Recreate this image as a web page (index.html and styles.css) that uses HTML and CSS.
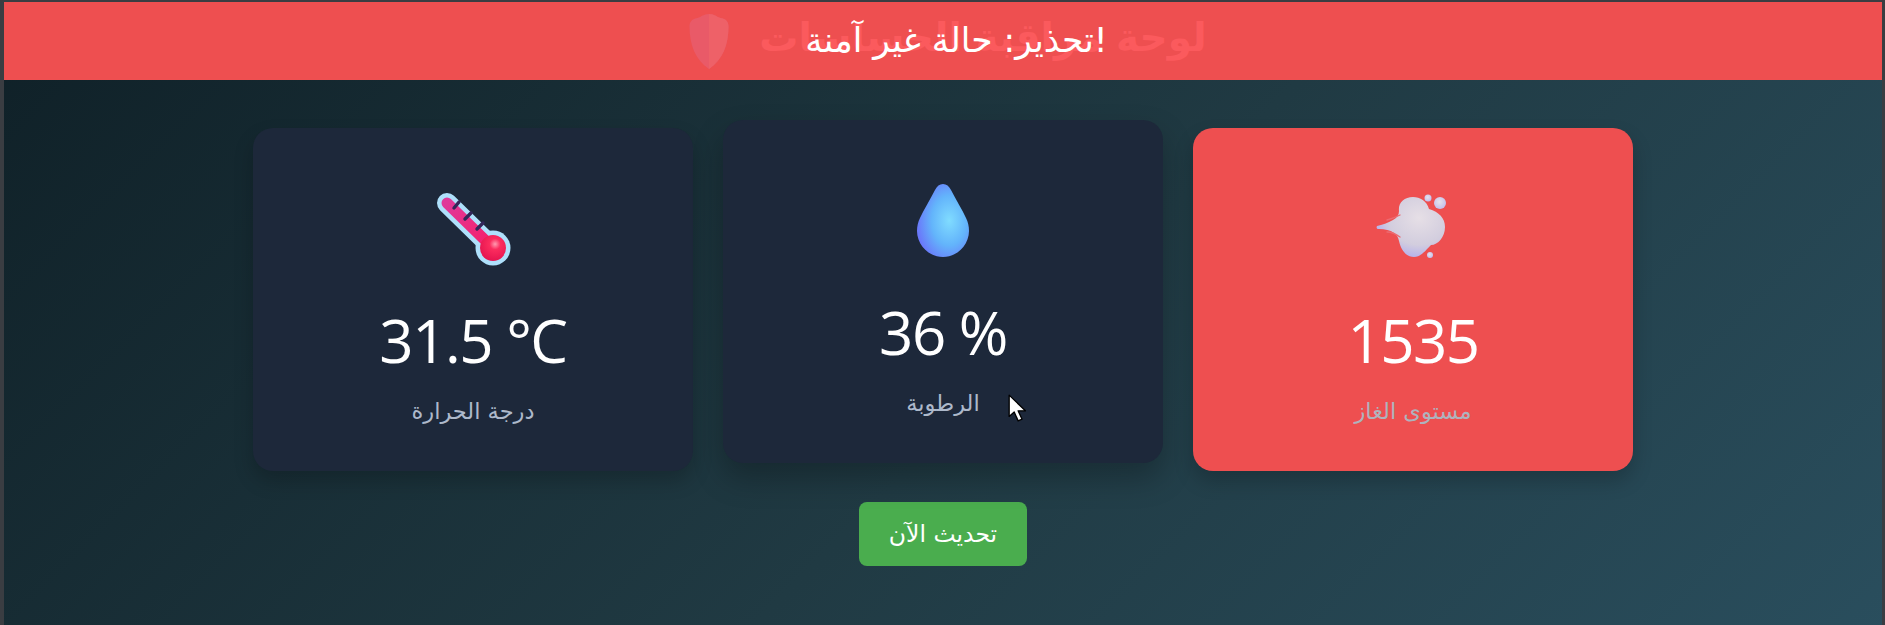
FILE: index.html
```html
<!DOCTYPE html>
<html lang="ar">
<head>
    <meta charset="UTF-8">
    <meta name="viewport" content="width=device-width, initial-scale=1.0">
    <title>لوحة مراقبة الحساسات</title>
    <link rel="stylesheet" href="styles.css">
</head>
<body>
    <header class="header">
        <div class="title-row">
            <svg class="shield" viewBox="0 0 34 48">
                <path d="M17 0 C22 0 24 3 29 4 C32 5 34 7 34 11 C34 27 29 40 17 48 C5 40 0 27 0 11 C0 7 2 5 5 4 C10 3 12 0 17 0 Z" fill="#e95a68"/>
                <path d="M17 0 C22 0 24 3 29 4 C32 5 34 7 34 11 C34 27 29 40 17 48 Z" fill="#ee6168"/>
            </svg>
            <h1 class="title">لوحة مراقبة الحساسات</h1>
        </div>
        <div class="alert">تحذير: حالة غير آمنة!</div>
    </header>

    <main class="main">
        <div class="cards">
            <div class="card">
                <svg class="icon" viewBox="0 0 80 80">
                    <defs>
                        <linearGradient id="tube" x1="0" y1="0" x2="1" y2="1">
                            <stop offset="0" stop-color="#e0389a"/>
                            <stop offset="1" stop-color="#f5206a"/>
                        </linearGradient>
                        <radialGradient id="bulb" cx="0.58" cy="0.35" r="0.7">
                            <stop offset="0" stop-color="#ff9ab0"/>
                            <stop offset="0.3" stop-color="#fb2c5e"/>
                            <stop offset="1" stop-color="#e3124e"/>
                        </radialGradient>
                    </defs>
                    <path d="M14 15 L60 60" stroke="#aee0fb" stroke-width="20" stroke-linecap="round"/>
                    <circle cx="60" cy="60" r="17.5" fill="#aee0fb"/>
                    <path d="M14 15 L56 56" stroke="url(#tube)" stroke-width="11" stroke-linecap="round"/>
                    <circle cx="60" cy="60" r="13" fill="url(#bulb)"/>
                    <path d="M26 14 L21 20 M38 25 L32 31 M50 35 L44 41" stroke="#33265a" stroke-width="3.4" stroke-linecap="round"/>
                </svg>
                <div class="value">31.5 °C</div>
                <div class="label">درجة الحرارة</div>
            </div>

            <div class="card card-raised">
                <svg class="icon" viewBox="0 0 80 80">
                    <defs>
                        <radialGradient id="drop" cx="0.62" cy="0.5" r="0.62">
                            <stop offset="0" stop-color="#80dcff"/>
                            <stop offset="0.55" stop-color="#63b4fb"/>
                            <stop offset="1" stop-color="#6a78fa"/>
                        </radialGradient>
                    </defs>
                    <path d="M40 4 C43.5 4 46 6 48 10 C53 20 59 29 63 38 C65 42 66 46 66 51 C66 65 54 77 40 77 C26 77 14 65 14 51 C14 46 15 42 17 38 C21 29 27 20 32 10 C34 6 36.5 4 40 4 Z" fill="url(#drop)"/>
                </svg>
                <div class="value">36 %</div>
                <div class="label">الرطوبة</div>
            </div>

            <div class="card card-danger">
                <svg class="icon" viewBox="0 0 80 80">
                    <defs>
                        <radialGradient id="puff" cx="0.62" cy="0.35" r="0.75">
                            <stop offset="0" stop-color="#e6dfe6"/>
                            <stop offset="0.6" stop-color="#d2cdde"/>
                            <stop offset="1" stop-color="#aaa6f2"/>
                        </radialGradient>
                        <radialGradient id="dot" cx="0.45" cy="0.4" r="0.7">
                            <stop offset="0" stop-color="#e8e2ea"/>
                            <stop offset="1" stop-color="#bdb9ee"/>
                        </radialGradient>
                    </defs>
                    <path d="M4 38 C3 40 4 41 6 41 C12 41 17 42 21 45 C24 47 25 49 26 53 C28 62 33 69 41 69 C48 69 53 62 58 57 C65 57 72 49 72 39 C72 30 66 24 56 21 C54 13 47 9 40 9 C31 9 25 15 26 23 C26 27 24 30 20 32 C15 35 9 37 4 38 Z" fill="url(#puff)"/>
                    <path d="M14 32 C18 31 23 29 27 27 M14 44 C18 44 23 46 27 49" stroke="#ec6a70" stroke-width="1.3" fill="none" stroke-linecap="round"/>
                    <circle cx="55" cy="10" r="3.5" fill="url(#dot)"/>
                    <circle cx="67" cy="15" r="6" fill="url(#dot)"/>
                    <circle cx="57" cy="67" r="3" fill="url(#dot)"/>
                </svg>
                <div class="value">1535</div>
                <div class="label">مستوى الغاز</div>
            </div>
        </div>

        <button class="refresh-btn" type="button">تحديث الآن</button>
    </main>

    <svg class="cursor" viewBox="0 0 16 25">
        <path d="M1 1 L1 20 L5.5 16 L9 24 L12.5 22.5 L9 15 L15.5 15 Z" fill="#fff" stroke="#000" stroke-width="1.2" stroke-linejoin="round"/>
    </svg>
</body>
</html>
```

FILE: styles.css
```css
* {
    box-sizing: border-box;
}

html, body {
    height: 100%;
}

body {
    margin: 0;
    overflow: hidden;
    border-style: solid;
    border-color: #3a3d42;
    border-width: 2px 3px 0 4px;
    background: linear-gradient(135deg, #0f2027, #203a43 55%, #2c5364 112%);
    color: white;
    font-family: "Open Sans", "DejaVu Sans", sans-serif;
}

.header {
    position: relative;
    height: 78px;
    background-color: #ee4f50;
}

.title-row {
    height: 100%;
    display: flex;
    justify-content: center;
    align-items: center;
    gap: 30px;
    padding-left: 10px;
}

.shield {
    width: 40px;
    height: 55px;
}

.title {
    margin: 0 0 8px;
    direction: rtl;
    font-family: "DejaVu Sans", sans-serif;
    font-size: 39px;
    font-weight: 700;
    color: #fb5a5d;
}

.alert {
    position: absolute;
    top: 0;
    left: 0;
    right: 0;
    bottom: 0;
    display: flex;
    justify-content: center;
    align-items: center;
    padding-left: 27px;
    padding-bottom: 2px;
    direction: ltr;
    font-family: "DejaVu Sans", sans-serif;
    font-size: 34.5px;
    color: white;
}

.main {
    display: flex;
    flex-direction: column;
    align-items: center;
    padding-top: 48px;
}

.cards {
    display: flex;
    gap: 30px;
}

.card {
    width: 440px;
    height: 343px;
    padding-top: 60px;
    display: flex;
    flex-direction: column;
    align-items: center;
    background-color: #1d283a;
    border-radius: 20px;
    box-shadow: 0 10px 20px rgba(0, 0, 0, 0.2);
}

.card-raised {
    transform: translateY(-8px);
    box-shadow: 0 15px 30px rgba(0, 0, 0, 0.25);
}

.card-danger {
    background-color: #ee4f50;
}

.icon {
    width: 80px;
    height: 80px;
}

.value {
    margin-top: 30px;
    font-size: 60px;
    line-height: 84px;
    letter-spacing: -1.5px;
}

.label {
    margin-top: 14px;
    font-family: "DejaVu Sans", sans-serif;
    font-size: 22.5px;
    line-height: 30px;
    color: #adb9cb;
}

.card-danger .label {
    color: #aeb3bd;
}

.refresh-btn {
    width: 168px;
    height: 64px;
    margin-top: 31px;
    background-color: #4aad4e;
    color: white;
    border: none;
    border-radius: 8px;
    font-family: "DejaVu Sans", sans-serif;
    font-size: 23.5px;
    cursor: pointer;
}

.cursor {
    position: absolute;
    left: 1008px;
    top: 394px;
    width: 18px;
    height: 28px;
}
```
